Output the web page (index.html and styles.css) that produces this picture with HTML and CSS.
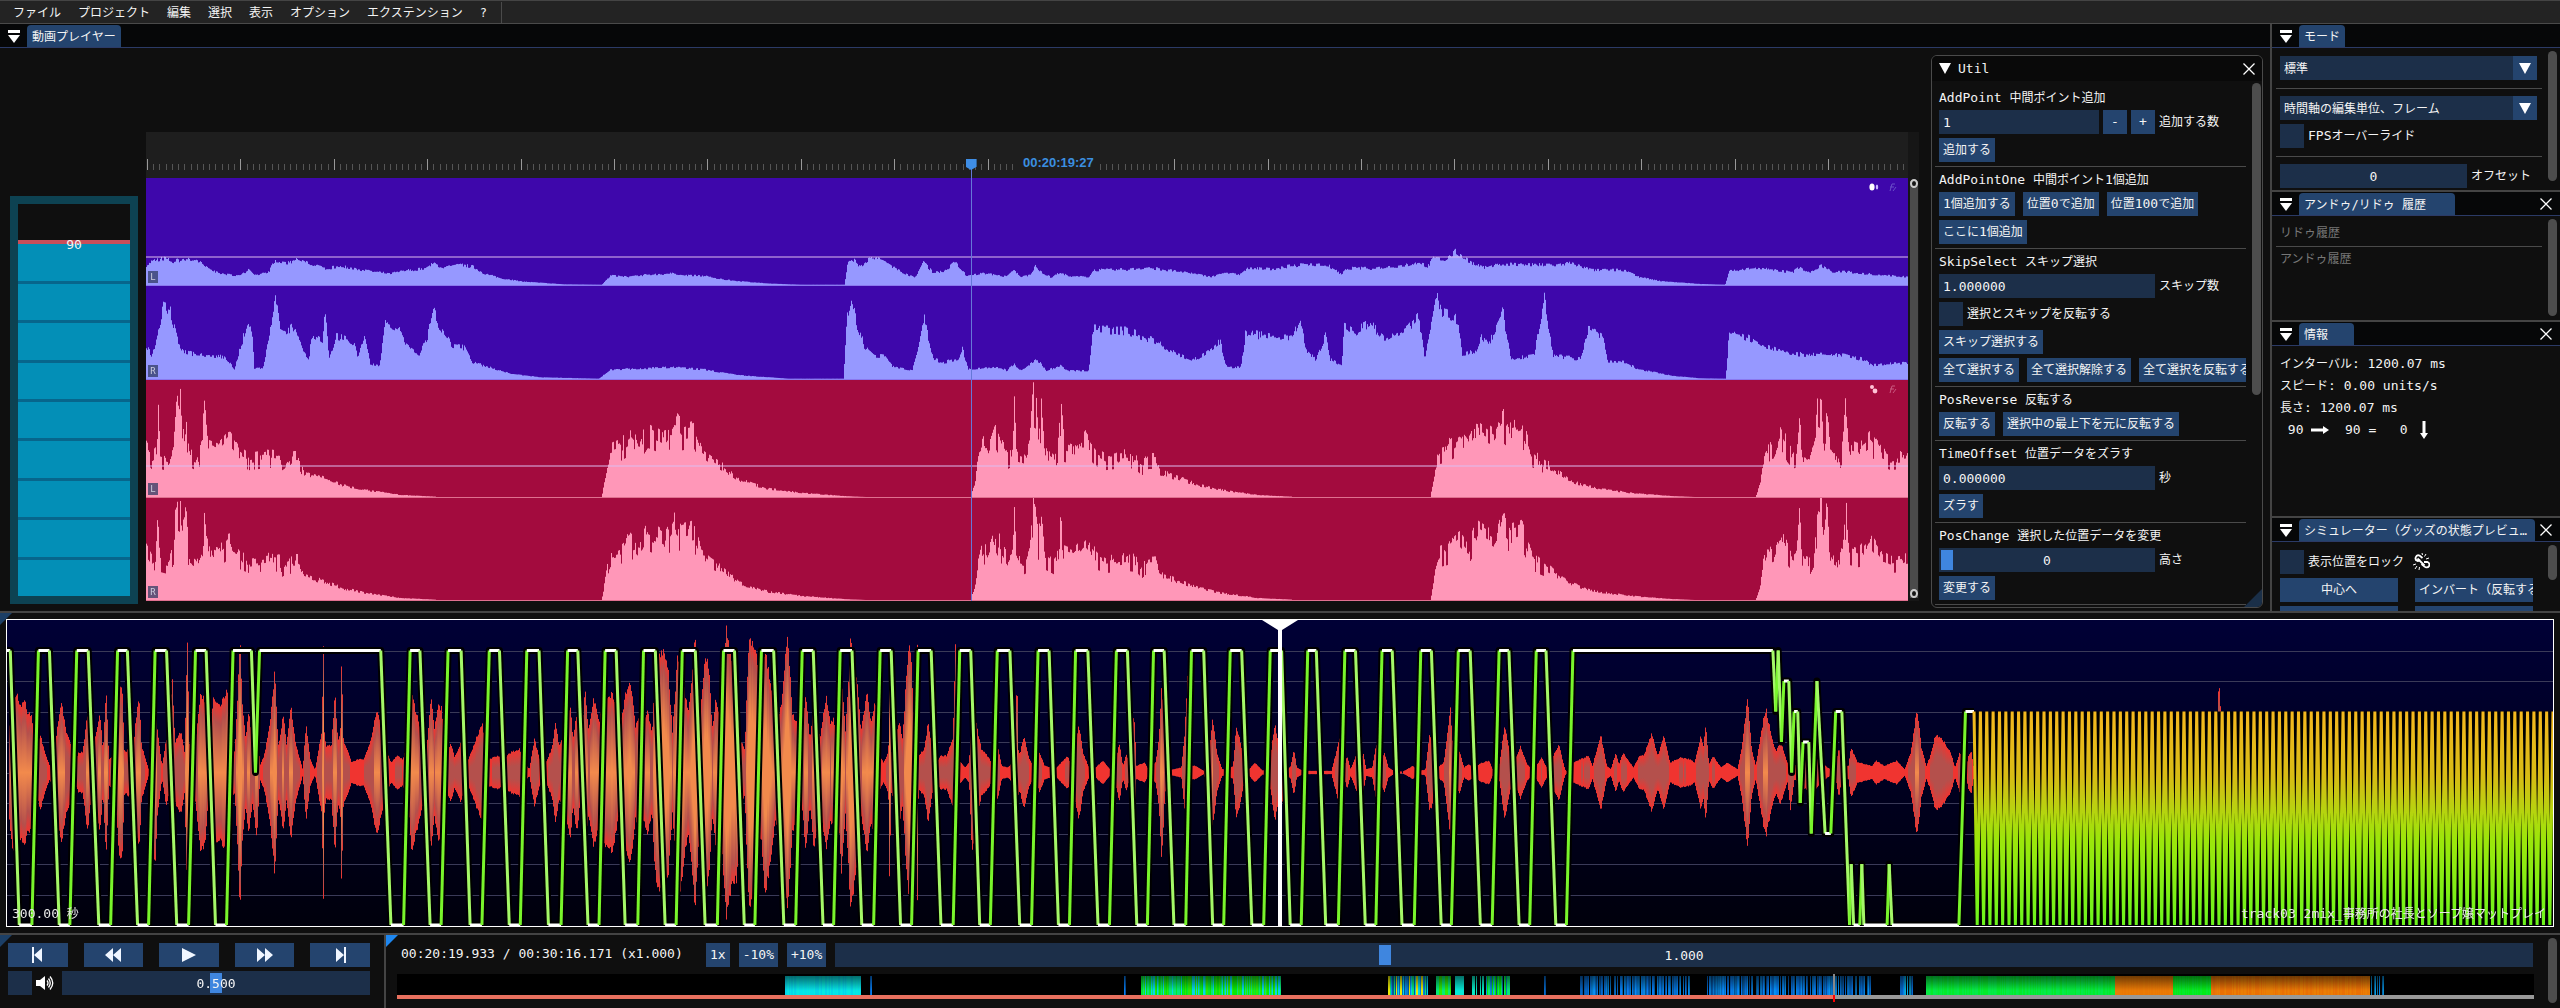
FILE: index.html
```html
<!DOCTYPE html>
<html lang="ja">
	<head>
		<meta charset="utf-8">
		<title>動画プレイヤー</title>
		<link rel="stylesheet" href="styles.css">
	</head>
	<body>
		<svg width="0" height="0" class="defs">
			<symbol id="dock" viewBox="0 0 12 13"><path d="M0 0h12v3H0zM0 5h12L6 13z" fill="#fff"/></symbol>
			<symbol id="tri" viewBox="0 0 12 11"><path d="M0 0h12L6 11z" fill="#fff"/></symbol>
			<symbol id="close" viewBox="0 0 12 12"><path d="M.5.5l11 11M11.5.5l-11 11" stroke="#fff" stroke-width="1.3"/></symbol>
		</svg>

		<nav class="menu">
			<a href="#">ファイル</a>
			<a href="#">プロジェクト</a>
			<a href="#">編集</a>
			<a href="#">選択</a>
			<a href="#">表示</a>
			<a href="#">オプション</a>
			<a href="#">エクステンション</a>
			<a href="#">?</a>
		</nav>

		<main class="main">
			<section class="video">
				<header class="tabs">
					<svg class="dock"><use href="#dock"/></svg>
					<span class="tab first">動画プレイヤー</span>
				</header>
				<div class="stage">
					<div class="sim">
						<div class="simInner">
							<div class="simTop"></div>
							<div class="simBar"></div><div class="simBar"></div><div class="simBar"></div>
							<div class="simBar"></div><div class="simBar"></div><div class="simBar"></div>
							<div class="simBar"></div><div class="simBar"></div><div class="simBar"></div>
							<span class="simValue en">90</span>
						</div>
					</div>
					<div class="editor">
						<div class="tracks">
							<div class="ruler">
								<canvas id="ruler"></canvas>
								<span class="timecode">00:20:19:27</span>
							</div>
							<div class="channel purple left1">
								<canvas data-wave="purpleL"></canvas>
								<div class="level"></div>
								<span class="badge">L</span>
								<svg class="fx" viewBox="0 0 30 10"><ellipse cx="3" cy="4" rx="2.6" ry="3.6" fill="#fff"/><ellipse cx="8" cy="4" rx="1.2" ry="2.6" fill="#c9b6ff"/><path d="M21 8l2-7h3M21 4h4M24 8l3-4" stroke="#6a4fc8" fill="none"/></svg>
							</div>
							<div class="channel purple right1">
								<canvas data-wave="purpleR"></canvas>
								<span class="badge">R</span>
							</div>
							<div class="channel red left2">
								<canvas data-wave="redL"></canvas>
								<div class="level"></div>
								<span class="badge">L</span>
								<svg class="fx" viewBox="0 0 30 10"><circle cx="3" cy="2" r="2" fill="#ffc3d6"/><circle cx="6" cy="6" r="2.4" fill="#ffc3d6"/><path d="M21 8l2-7h3M21 4h4M24 8l3-4" stroke="#c95a80" fill="none"/></svg>
							</div>
							<div class="channel red right2">
								<canvas data-wave="redR"></canvas>
								<span class="badge">R</span>
							</div>
							<div class="needle"></div>
						</div>
						<div class="zoomBar"><i></i></div>
					</div>
				</div>

				<div class="util">
					<header class="utilHead">
						<svg class="tri"><use href="#tri"/></svg>
						<span class="en">Util</span>
						<svg class="close"><use href="#close"/></svg>
					</header>
					<div class="utilBody">
						<div class="utilContent">
							<p><span class="en">AddPoint </span>中間ポイント追加</p>
							<div class="row">
								<input class="field short en" id="addCount" type="text" value="1">
								<button class="step en">-</button>
								<button class="step en">+</button>
								<label for="addCount">追加する数</label>
							</div>
							<div class="row"><button>追加する</button></div>
							<hr>
							<p><span class="en">AddPointOne </span>中間ポイント<span class="en">1</span>個追加</p>
							<div class="row wide"><button><span class="en">1</span>個追加する</button><button>位置<span class="en">0</span>で追加</button><button>位置<span class="en">100</span>で追加</button></div>
							<div class="row"><button>ここに<span class="en">1</span>個追加</button></div>
							<hr>
							<p><span class="en">SkipSelect </span>スキップ選択</p>
							<div class="row">
								<input class="field en" id="skip" type="text" value="1.000000">
								<label for="skip">スキップ数</label>
							</div>
							<div class="row"><input type="checkbox" id="skipRev"><label for="skipRev">選択とスキップを反転する</label></div>
							<div class="row"><button>スキップ選択する</button></div>
							<div class="row wide"><button>全て選択する</button><button>全て選択解除する</button><button>全て選択を反転する</button></div>
							<hr>
							<p><span class="en">PosReverse </span>反転する</p>
							<div class="row wide"><button>反転する</button><button>選択中の最上下を元に反転する</button></div>
							<hr>
							<p><span class="en">TimeOffset </span>位置データをズラす</p>
							<div class="row">
								<input class="field en" id="offset" type="text" value="0.000000">
								<label for="offset">秒</label>
							</div>
							<div class="row"><button>ズラす</button></div>
							<hr>
							<p><span class="en">PosChange </span>選択した位置データを変更</p>
							<div class="row">
								<div class="slider field"><input type="range" id="height" min="0" max="100" value="0"><output class="en">0</output></div>
								<label for="height">高さ</label>
							</div>
							<div class="row"><button>変更する</button></div>
							<hr>
						</div>
						<div class="scroll"><i class="t60"></i></div>
					</div>
					<div class="grip"></div>
				</div>
			</section>

			<aside class="side">
				<section class="panel">
					<header class="tabs">
						<svg class="dock"><use href="#dock"/></svg>
						<span class="tab">モード</span>
					</header>
					<div class="panelBody">
						<div class="panelContent">
							<div class="combo"><select aria-label="モード"><option>標準</option></select><span><svg class="tri"><use href="#tri"/></svg></span></div>
							<hr class="loose">
							<div class="combo"><select aria-label="編集単位"><option>時間軸の編集単位、フレーム</option></select><span><svg class="tri"><use href="#tri"/></svg></span></div>
							<div class="row"><input type="checkbox" id="fps"><label for="fps"><span class="en">FPS</span>オーバーライド</label></div>
							<hr class="loose">
							<div class="row"><input class="field drag en" type="text" id="ofs" value="0"><label for="ofs">オフセット</label></div>
						</div>
						<div class="scroll"><i class="t94"></i></div>
					</div>
				</section>

				<section class="panel">
					<header class="tabs">
						<svg class="dock"><use href="#dock"/></svg>
						<span class="tab history">アンドゥ/リドゥ 履歴</span>
						<svg class="close"><use href="#close"/></svg>
					</header>
					<div class="panelBody">
						<div class="panelContent dim">
							<p>リドゥ履歴</p>
							<hr>
							<p>アンドゥ履歴</p>
						</div>
						<div class="scroll"><i class="t100"></i></div>
					</div>
				</section>

				<section class="panel">
					<header class="tabs">
						<svg class="dock"><use href="#dock"/></svg>
						<span class="tab info">情報</span>
						<svg class="close"><use href="#close"/></svg>
					</header>
					<div class="panelBody">
						<div class="panelContent lines">
							<p>インターバル<span class="en">: 1200.07 ms</span></p>
							<p>スピード<span class="en">: 0.00 units/s</span></p>
							<p>長さ<span class="en">: 1200.07 ms</span></p>
							<p class="en arrows"> 90 <svg width="18" height="18" viewBox="0 0 18 18"><path d="M0 7.500h12V5l6 4-6 4v-2.500H0z" fill="#fff"/></svg>  90 =   0 <svg width="18" height="18" viewBox="0 0 18 18"><path d="M7.500 0v12H5l4 6 4-6h-2.500V0z" fill="#fff"/></svg></p>
						</div>
					</div>
				</section>

				<section class="panel">
					<header class="tabs">
						<svg class="dock"><use href="#dock"/></svg>
						<span class="tab long">シミュレーター（グッズの状態プレビュ…</span>
						<svg class="close"><use href="#close"/></svg>
					</header>
					<div class="panelBody">
						<div class="panelContent">
							<div class="row">
								<input type="checkbox" id="lock"><label for="lock">表示位置をロック</label>
								<svg class="link" viewBox="0 0 18 18"><path d="M8.500 7.500L5.500 8a2.800 2.800 0 1 1 2-5.500l3 2.500M9.500 11l3 2.500a2.800 2.800 0 1 0 3-4.500L12 9M5.500 5.500l7 7" fill="none" stroke="#fff" stroke-width="1.800"/><path d="M10 0l.5 2M14 1l-1.500 2.500M17 5l-3 1M1 12l3-1M3 16l2-3M7 17l.5-3" stroke="#fff"/></svg>
							</div>
							<div class="pair"><button>中心へ</button><button class="cut">インバート（反転する）</button></div>
							<div class="pair"><button></button><button></button></div>
						</div>
						<div class="scroll"><i class="t56"></i></div>
					</div>
				</section>
			</aside>
		</main>

		<section class="timeline">
			<div class="corner"></div>
			<div class="graph">
				<canvas id="graph"></canvas>
				<svg class="playhead" viewBox="0 0 36 306" preserveAspectRatio="none"><path d="M0 0h36L20 10v296h-4V10z" fill="#fff"/></svg>
				<span class="span"><span class="en">300.00 </span>秒</span>
				<span class="track"><span class="en">track03 2mix_</span>事務所の社長とソープ嬢マットプレイ</span>
			</div>
		</section>

		<footer class="bottom">
			<section class="controls">
				<div class="corner"></div>
				<div class="buttons">
					<button aria-label="最初"><svg viewBox="0 0 20 16"><path d="M4 0h2v16H4zM14 1v14L6 8z"/></svg></button>
					<button aria-label="戻る"><svg viewBox="0 0 20 16"><path d="M10 1v14L2 8zM18 1v14l-8-7z"/></svg></button>
					<button aria-label="再生"><svg viewBox="0 0 20 16"><path d="M3 1v14l14-7z"/></svg></button>
					<button aria-label="進む"><svg viewBox="0 0 20 16"><path d="M2 1v14l8-7zM10 1v14l8-7z"/></svg></button>
					<button aria-label="最後"><svg viewBox="0 0 20 16"><path d="M14 0h2v16h-2zM6 1v14l8-7z"/></svg></button>
				</div>
				<div class="volume">
					<input type="checkbox" id="mute">
					<label for="mute" aria-label="ミュート"><svg width="18" height="16" viewBox="0 0 18 16"><path d="M0 5h4l5-4v14l-5-4H0z" fill="#fff"/><path d="M11 5.500q2 2.500 0 5M12.500 3.500q3.500 4.500 0 9M14 1.500q5.500 6.500 0 13" fill="none" stroke="#fff" stroke-width="1.300"/></svg></label>
					<div class="slider grow"><input type="range" aria-label="音量" min="0" max="1000" value="500"><output class="en">0.500</output></div>
				</div>
			</section>
			<section class="seek">
				<div class="corner bright"></div>
				<div class="seekContent">
					<div class="seekRow">
						<span class="time en">00:20:19.933 / 00:30:16.171 (x1.000)</span>
						<button class="en">1x</button>
						<button class="en">-10%</button>
						<button class="en">+10%</button>
						<div class="slider grow"><input type="range" aria-label="速度" min="0" max="1000" value="322"><output class="en">1.000</output></div>
					</div>
					<div class="heat">
						<canvas id="heat"></canvas>
						<div class="progress"><i></i></div>
						<div class="pos"></div>
					</div>
				</div>
				<div class="scroll"><i class="t100"></i></div>
			</section>
		</footer>
		<script src="script.js"></script>
	</body>
</html>
```
FILE: styles.css
```css
* {
	box-sizing: border-box;
}

html, body {
	margin: 0;
	height: 100%;
	background: #0f0f0f;
}

body {
	display: flex;
	flex-direction: column;
	overflow: hidden;
	color: #f4f4f4;
	font-family: "DejaVu Sans Mono", "Noto Sans CJK JP", monospace;
	font-size: 12px;
	line-height: 17px;
	white-space: nowrap;
}

p {
	height: 17px;
	margin: 0;
	flex-shrink: 0;
}

canvas {
	display: block;
	width: 100%;
	height: 100%;
}

.defs {
	position: absolute;
}

.en {
	font-size: 13px;
	white-space: pre;
}

button {
	height: 24px;
	padding: 0 4px;
	border: 0;
	background: #24446e;
	color: #f4f4f4;
	font-family: inherit;
	font-size: 12px;
	line-height: 24px;
	white-space: nowrap;
	flex-shrink: 0;
}

button.en {
	font-size: 13px;
}

input, select {
	margin: 0;
	border: 0;
	border-radius: 0;
	background: #1c2f49;
	color: #f4f4f4;
	font-family: inherit;
	font-size: 12px;
	outline: none;
}

input.en {
	font-size: 13px;
}

input[type=checkbox] {
	appearance: none;
	width: 24px;
	height: 24px;
	flex-shrink: 0;
}

hr {
	height: 1px;
	margin: 0 0 0 -4px;
	border: 0;
	background: #4a4a4a;
	flex-shrink: 0;
}

/* menu */
.menu {
	display: flex;
	align-items: center;
	gap: 17px;
	width: 100%;
	height: 24px;
	padding: 2px 0 0 13px;
	background: #232323;
	border-top: 1px solid #444;
	border-bottom: 1px solid #4a4a4a;
}

.menu a {
	color: #f4f4f4;
	text-decoration: none;
}

.menu a:last-child {
	line-height: 22px;
	padding-right: 14px;
	border-right: 1px solid #4a4a4a;
}

/* tabs */
.tabs {
	display: flex;
	align-items: center;
	height: 24px;
	padding: 1px 8px 0 8px;
	background: #060708;
	border-bottom: 1px solid #2b3a66;
	flex-shrink: 0;
}

.dock {
	width: 12px;
	height: 13px;
}

.tab {
	height: 22px;
	margin-left: 7px;
	padding: 0 5px;
	border-radius: 4px 4px 0 0;
	background: #24446e;
	line-height: 24px;
}

.side .tab {
	min-width: 46px;
}

.side .tab.history {
	min-width: 156px;
}

.side .tab.info {
	min-width: 55px;
}

.tab.long {
	flex: 1;
	overflow: hidden;
	margin-right: 5px;
}

.close {
	width: 12px;
	height: 12px;
	margin-left: auto;
	flex-shrink: 0;
}

.tri {
	width: 12px;
	height: 11px;
}

/* layout */
.main {
	display: flex;
	flex: 1;
	min-height: 0;
	border-bottom: 2px solid #444;
}

.video {
	position: relative;
	display: flex;
	flex-direction: column;
	flex: 1;
	min-width: 0;
}

.stage {
	display: flex;
	flex: 1;
	gap: 8px;
	min-height: 0;
	padding: 84px 351px 7px 10px;
}

.sim {
	width: 128px;
	margin-top: 64px;
	padding: 8px;
	background: #0d4252;
}

.simInner {
	position: relative;
	display: flex;
	flex-direction: column;
	height: 100%;
}

.simTop, .simBar {
	flex: 1;
	background: #0f0f0f;
}

.simTop {
	border-bottom: 1px solid #c94e5a;
}

.simBar {
	background: #038fb7;
	border-top: 3px solid #07668c;
}

.simTop + .simBar {
	border-top-color: #c94e5a;
}

.simValue {
	position: absolute;
	top: 10%;
	left: 0;
	right: 0;
	margin-top: -7px;
	text-align: center;
}

.editor {
	display: flex;
	flex: 1;
	min-width: 0;
	margin-bottom: 3px;
	background: #1e1e1e;
}

.tracks {
	position: relative;
	display: grid;
	grid-template-rows: 46px 108fr 94fr 118fr 103fr;
	flex: 1;
	min-width: 0;
}

.ruler, .channel {
	position: relative;
	min-height: 0;
	overflow: hidden;
}

.channel canvas {
	position: absolute;
	inset: 0;
}

.purple {
	background: #3e07ab;
	border-bottom: 1px solid #8a78ee;
}

.red {
	background: #a30b3e;
	border-bottom: 1px solid #e0708f;
}

.level {
	position: absolute;
	top: 73%;
	left: 0;
	right: 0;
	height: 2px;
	background: rgba(222, 190, 240, .5);
}

.badge {
	position: absolute;
	left: 2px;
	bottom: 2px;
	width: 10px;
	height: 12px;
	background: rgba(50, 60, 100, .75);
	color: #ccd;
	font-size: 9px;
	line-height: 12px;
	text-align: center;
}

.fx {
	position: absolute;
	top: 5px;
	right: 9px;
	width: 30px;
	height: 10px;
}

.timecode {
	position: absolute;
	top: 22px;
	left: 50%;
	margin-left: -8px;
	padding: 0 4px;
	background: #1e1e1e;
	color: #3b8fe0;
	font-family: "Liberation Sans", sans-serif;
	font-size: 13px;
	font-weight: bold;
}

.needle {
	position: absolute;
	top: 27px;
	bottom: 0;
	left: 46.8%;
	width: 1px;
	background: #6577d8;
}

.needle::before {
	content: "";
	position: absolute;
	left: -5px;
	width: 11px;
	height: 11px;
	background: #3f8ee6;
	clip-path: polygon(0 0, 100% 0, 100% 70%, 50% 100%, 0 70%);
}

.zoomBar {
	width: 11px;
	padding: 49px 0 3px 2px;
	background: #161616;
}

.zoomBar i {
	position: relative;
	display: block;
	width: 8px;
	height: 100%;
	background: #4b4b4b;
}

.zoomBar i::before, .zoomBar i::after {
	content: "";
	position: absolute;
	left: 0;
	width: 4px;
	height: 5px;
	border: 2px solid #ccc;
	border-radius: 50%;
	background: #161616;
}

.zoomBar i::before {
	top: -2px;
}

.zoomBar i::after {
	bottom: 0;
}

/* util window */
.util {
	position: absolute;
	top: 31px;
	right: 7px;
	bottom: 3px;
	width: 332px;
	display: flex;
	flex-direction: column;
	border: 1px solid #4a4a4a;
	border-radius: 6px;
	background: #0f0f0f;
	overflow: hidden;
}

.utilHead {
	display: flex;
	align-items: center;
	gap: 7px;
	height: 25px;
	padding: 0 7px;
	background: #090909;
	flex-shrink: 0;
}

.utilBody {
	display: flex;
	flex: 1;
	min-height: 0;
}

.utilContent {
	display: flex;
	flex-direction: column;
	gap: 4px;
	flex: 1;
	min-width: 0;
	overflow: hidden;
	padding: 8px 0 0 7px;
}

.row {
	display: flex;
	align-items: center;
	gap: 4px;
	height: 24px;
	flex-shrink: 0;
}

.row.wide {
	gap: 8px;
}

.field {
	width: 216px;
	height: 24px;
	padding: 0 4px;
}

.field.short {
	width: 160px;
}

.step {
	width: 24px;
}

.grip {
	position: absolute;
	right: 0;
	bottom: 0;
	width: 18px;
	height: 18px;
	background: #1a2f48;
	clip-path: polygon(100% 0, 100% 100%, 0 100%);
}

.scroll {
	width: 9px;
	margin: 2px 1px 4px 6px;
	flex-shrink: 0;
}

.scroll i {
	display: block;
	height: 100%;
	border-radius: 5px;
	background: #4d4d4d;
}

.scroll .t60 {
	height: 60%;
}

.scroll .t94 {
	height: 96%;
}

.scroll .t56 {
	height: 56%;
}

/* sliders */
.slider {
	position: relative;
	height: 24px;
	padding: 0;
	background: #1c2f49;
}

.slider input {
	appearance: none;
	display: block;
	width: 100%;
	height: 24px;
	padding: 0 2px;
	background: none;
}

.slider input::-webkit-slider-thumb {
	appearance: none;
	width: 12px;
	height: 20px;
	background: #3f86df;
}

.slider output {
	position: absolute;
	inset: 0;
	line-height: 26px;
	text-align: center;
	pointer-events: none;
}

.grow {
	flex: 1;
}

/* right column */
.side {
	display: grid;
	grid-template-rows: 166fr 130fr 196fr 95fr;
	width: 290px;
	border-left: 2px solid #444;
}

.panel {
	display: flex;
	flex-direction: column;
	min-height: 0;
	overflow: hidden;
}

.panel + .panel {
	border-top: 2px solid #444;
}

.panelBody {
	display: flex;
	flex: 1;
	min-height: 0;
}

.panelContent {
	display: flex;
	flex-direction: column;
	gap: 4px;
	flex: 1;
	min-width: 0;
	overflow: hidden;
	padding: 8px 0 0 8px;
}

.panel .scroll {
	margin: 3px 3px 4px 6px;
}

.loose {
	margin: 4px 0 3px -4px;
}

.combo {
	position: relative;
	height: 24px;
	margin-right: 5px;
	flex-shrink: 0;
}

.combo select {
	appearance: none;
	width: 100%;
	height: 24px;
	padding: 2px 28px 0 4px;
}

.combo span {
	position: absolute;
	top: 0;
	right: 0;
	display: grid;
	place-items: center;
	width: 24px;
	height: 24px;
	background: #24446e;
	pointer-events: none;
}

.drag {
	width: 187px;
	text-align: center;
}

.dim {
	gap: 4px;
	padding-top: 9px;
	color: #777;
}

.lines {
	gap: 5px;
	padding-top: 9px;
}

.arrows {
	display: flex;
	align-items: center;
}

.link {
	width: 18px;
	height: 18px;
	margin-left: 4px;
}

.pair {
	display: grid;
	grid-template-columns: 1fr 1fr;
	gap: 17px;
	margin-right: 9px;
	flex-shrink: 0;
}

.pair button {
	overflow: hidden;
}

.cut {
	text-align: left;
}

/* timeline */
.corner {
	position: absolute;
	top: 0;
	left: 0;
	width: 12px;
	height: 12px;
	background: #1c3f66;
	clip-path: polygon(0 0, 100% 0, 0 100%);
}

.corner.bright {
	background: #1e87f0;
}

.timeline {
	position: relative;
	height: 322px;
	padding: 6px;
	border-bottom: 2px solid #444;
	flex-shrink: 0;
}

.graph {
	position: relative;
	height: 308px;
	border: 1px solid #fff;
	background: linear-gradient(#000036, #00000c);
}

.playhead {
	position: absolute;
	top: 0;
	left: 50%;
	width: 36px;
	height: 100%;
	margin-left: -18px;
}

.span, .track {
	position: absolute;
	bottom: 3px;
	left: 5px;
	color: #e8e8e8;
}

.track {
	left: auto;
	right: 7px;
}

/* bottom */
.bottom {
	display: flex;
	height: 73px;
	flex-shrink: 0;
}

.controls {
	position: relative;
	width: 386px;
	padding: 8px 14px 0 8px;
	border-right: 2px solid #444;
}

.buttons {
	display: grid;
	grid-template-columns: repeat(5, 1fr);
	gap: 16px;
}

.buttons svg {
	display: block;
	width: 20px;
	height: 16px;
	margin: 0 auto;
	fill: #f0f6ff;
}

.volume {
	display: flex;
	align-items: center;
	margin-top: 4px;
}

.volume label {
	display: flex;
	margin: 0 8px 0 4px;
}

.seek {
	position: relative;
	display: flex;
	flex: 1;
	min-width: 0;
}

.seekContent {
	flex: 1;
	min-width: 0;
	padding: 8px 12px 0 11px;
}

.seekRow {
	display: flex;
	gap: 9px;
	margin-right: 1px;
	padding-left: 4px;
}

.time {
	width: 296px;
	line-height: 22px;
}

.seek .scroll {
	margin: 3px 3px 5px 2px;
}

.heat {
	position: relative;
	height: 25px;
	margin-top: 7px;
	background: #000;
}

.heat canvas {
	height: 21px;
}

.progress {
	height: 4px;
	background: #999;
}

.progress i {
	display: block;
	width: 67.2%;
	height: 4px;
	background: #e8705e;
}

.pos {
	position: absolute;
	top: 0;
	left: 67.2%;
	width: 2px;
	height: 28px;
	background: linear-gradient(#888 21px, #f00 21px);
}
```
FILE: script.js
```js
// keyframes: x, height, x, height ...
var waves = {
	purpleL: [12,60,25,75,40,80,60,70,80,80,100,75,118,50,135,38,150,32,175,28,190,45,200,28,225,40,235,70,260,65,277,80,295,65,320,50,350,55,375,50,400,42,435,34,470,45,500,50,512,65,530,52,560,60,580,55,600,35,630,20,670,10,740,2,805,1,820,28,850,25,880,30,930,35,960,28,985,28,1000,20,1040,12,1100,4,1150,1,1228,1,1233,70,1240,80,1255,55,1270,78,1285,80,1300,70,1320,45,1350,22,1365,70,1380,40,1400,40,1420,68,1440,28,1470,35,1510,25,1522,45,1535,25,1550,30,1560,55,1568,40,1588,22,1603,40,1618,25,1653,25,1660,45,1688,45,1768,50,1828,35,1868,25,1883,35,1918,32,1928,50,1968,48,2018,60,2068,60,2093,32,2103,50,2148,50,2208,60,2228,70,2243,55,2253,80,2273,75,2292,100,2308,80,2328,60,2348,50,2368,65,2418,60,2468,60,2493,65,2528,45,2588,45,2608,25,2648,12,2718,3,2761,1,2768,42,2818,50,2878,38,2891,55,2908,35,2928,60,2948,38,2968,40,3018,32,3080,24],
	purpleR: [12,100,22,70,32,140,42,220,52,215,62,150,72,85,100,72,150,65,165,30,175,90,190,180,197,120,200,30,215,35,230,170,238,245,245,150,255,140,272,160,285,80,295,60,300,130,318,110,323,220,330,60,343,130,375,110,380,60,393,130,402,45,418,40,428,165,440,150,455,140,470,90,487,70,500,120,512,200,525,150,545,100,565,95,580,50,610,35,650,15,700,5,800,1,820,28,930,35,985,28,1040,12,1130,1,1226,1,1232,180,1240,250,1250,160,1262,100,1280,70,1295,70,1310,40,1345,25,1355,80,1367,180,1382,60,1400,50,1425,60,1433,90,1443,30,1500,35,1510,25,1522,45,1535,25,1560,55,1568,50,1578,25,1603,40,1618,25,1653,25,1660,150,1718,145,1768,115,1808,75,1833,55,1853,75,1881,115,1893,35,1918,35,1926,140,1968,125,2008,130,2021,175,2033,80,2048,60,2065,130,2073,60,2093,40,2098,160,2118,140,2143,170,2168,115,2208,150,2228,185,2238,60,2258,250,2268,200,2296,180,2303,75,2328,85,2338,130,2348,100,2374,200,2388,60,2428,70,2446,240,2461,70,2508,60,2523,150,2548,130,2556,55,2588,50,2608,30,2668,10,2718,2,2762,1,2768,140,2788,135,2828,100,2868,75,2968,70,2998,60,3018,42,3080,50]
};
var hitA = [0,0,8,40,12,100,22,160,30,130,45,200,55,150,65,120,72,130,76,280,80,120,95,110,103,150,109,300,115,290,118,170,124,270,130,130,145,110,152,150,157,275,163,150,180,140,200,175,220,130,235,115,270,125,288,120,293,80,310,120,322,120,330,75,365,55,400,35,440,20,500,6,560,1];
var hitB = [0,0,8,80,14,140,30,150,50,180,65,150,80,210,110,180,127,230,140,200,160,210,175,130,190,110,210,90,240,50,290,25,350,12,420,3,460,0];

var pulse = [12,90,24,90,46,0,77,0,93,90,120,90,144,0,170,0,187,90,215,90,241,0,270,0,287,90,311,90,336,0,363,0,379,90,407,90,432,0,461,0,478,90,504,90,527,0,554,0,570,90,615,90,625,50,635,90,932,90,957,0,988,0,1004,90,1028,90,1053,0,1080,0,1097,90,1129,90,1151,0,1180,0,1198,90,1223,90,1247,0,1274,0,1290,90,1320,90,1343,0,1374,0,1390,90,1415,90,1440,0,1467,0,1482,90,1509,90,1531,0,1562,0,
	1576,90,1605,90,1629,0,1656,0,1671,90,1703,90,1727,0,1757,0,1772,90,1799,90,1823,0,1849,0,1865,90,1895,90,1920,0,1949,0,1965,90,1992,90,2016,0,2042,0,2058,90,2087,90,2111,0,2140,0,2156,90,2183,90,2206,0,2233,0,2249,90,2281,90,2305,0,2335,0,2351,90,2378,90,2400,0,2426,0,2443,90,2474,90,2498,0,2527,0,2543,90,2570,90,2593,0,2620,0,2635,90,2665,90,2690,0,2718,0,2735,90,2762,90,2785,0,2811,0,2826,90,2852,90,2876,0,2905,0,2919,90,2949,90,2971,0,2998,0,3014,90,3042,90,3067,0,3096,0,3112,90,3140,90,
	3161,0,3188,0,3204,90,3225,90,3248,0,3279,0,3295,90,3321,90,3345,0,3371,0,3386,90,3411,90,3435,0,3465,0,3481,90,3507,90,3531,0,3556,0,3573,90,3602,90,3627,0,3656,0,3673,90,3697,90,3722,0,3748,0,3764,90,3788,90,3812,0,3838,0,3854,90,4344,90,4351,70,4357,90,4365,60,4371,80,4383,80,4390,50,4396,70,4405,70,4411,40,4418,60,4432,60,4438,30,4452,80,4472,30,4486,30,4498,70,4513,70,4532,0,4536,20,4542,0,4557,0,4562,20,4567,0,4624,0,4629,20,4636,0,4800,0,4816,70,4837,70];

var audio = [20,125,28,230,36,235,50,205,58,225,66,170,75,175,85,60,97,110,108,60,120,20,135,100,148,215,160,120,170,90,178,15,190,60,200,60,213,180,222,60,232,110,243,180,250,60,258,245,265,40,280,60,290,260,297,270,303,60,325,80,335,210,340,200,345,80,362,10,372,30,377,300,384,120,395,20,405,100,412,60,420,290,427,90,442,125,450,60,457,405,462,90,475,60,488,230,500,220,510,60,520,220,535,200,545,215,555,250,562,80,573,60,580,230,586,405,592,200,600,100,607,180,617,90,627,200,635,20,645,50,660,150,671,300,680,80,693,180,700,80,711,200,722,90,740,8,748,150,758,40,770,8,780,80,787,120,790,422,793,120,797,80,810,80,819,235,826,100,832,120,835,360,839,100,860,30,875,40,890,40,905,90,922,190,935,110,945,60,957,30,970,50,985,40,1000,100,1006,240,1020,170,1030,120,1042,60,1055,225,1062,130,1072,200,1080,190,1090,40,1102,90,1112,45,1127,90,1140,20,1155,70,1180,150,1190,50,1200,40,1215,50,1230,40,1250,60,1272,70,1282,30,1295,10,1308,100,1320,40,1335,30,1350,70,1360,150,1368,80,1385,120,1395,210,1402,100,1412,180,1422,60,1432,250,1440,130,1453,225,1465,150,1480,215,1500,235,1515,120,1530,230,1543,275,1555,140,1565,180,
	1573,130,1585,190,1596,120,1603,300,1613,360,1623,370,1636,300,1646,120,1658,340,1666,345,1678,220,1686,180,1701,410,1713,150,1726,350,1736,320,1743,130,1753,225,1763,150,1778,430,1790,340,1803,320,1813,100,1823,70,1833,400,1853,360,1863,180,1873,370,1886,270,1898,140,1913,200,1928,420,1940,180,1950,150,1963,90,1973,240,1983,100,1993,230,2008,100,2023,235,2033,140,2041,170,2050,60,2060,300,2070,120,2083,415,2096,300,2108,130,2123,240,2133,150,2142,220,2150,60,2163,30,2175,60,2178,350,2182,60,2203,150,2210,100,2223,360,2231,370,2238,120,2243,60,2246,425,2249,50,2263,70,2273,155,2283,60,2293,25,2303,50,2318,50,2333,100,2340,390,2344,60,2346,40,2363,15,2373,30,2380,240,2388,160,2403,70,2418,50,2428,30,2443,80,2453,20,2468,15,2478,30,2487,60,2490,330,2494,60,2498,60,2508,110,2518,50,2533,10,2546,60,2558,20,2573,15,2588,15,2613,50,2626,20,2635,100,2642,145,2652,60,2665,20,2678,10,2701,35,2718,10,2730,20,2741,90,2750,20,2758,55,2768,15,2777,190,2783,20,2803,30,2813,8,2830,30,2838,100,2845,270,2853,60,2868,8,2893,15,2901,110,2908,280,2915,20,2928,20,2948,5,2961,60,2970,165,2980,60,2993,10,3008,10,3020,20,3028,140,3038,90,3048,20,3058,8,3073,30,3093,5,3108,20,3123,150,3133,60,
	3141,90,3151,5,3161,20,3169,70,3176,15,3191,5,3261,5,3281,100,3286,40,3294,20,3299,50,3308,10,3324,60,3331,10,3339,60,3346,10,3361,15,3371,85,3378,20,3391,60,3401,15,3416,3,3436,3,3461,20,3471,5,3491,8,3501,110,3508,100,3516,10,3536,30,3544,100,3552,200,3560,50,3576,60,3586,15,3596,25,3611,15,3631,30,3648,35,3656,10,3671,10,3686,145,3696,70,3706,20,3724,80,3741,25,3756,5,3776,45,3791,10,3808,60,3819,85,3831,20,3836,3,3854,30,3891,50,3901,20,3921,115,3936,20,3946,10,3958,60,3966,25,3976,60,4001,15,4016,50,4026,50,4046,115,4061,50,4076,110,4091,30,4116,45,4141,40,4151,30,4166,110,4173,80,4179,145,4186,25,4196,50,4216,15,4231,30,4256,10,4266,70,4281,225,4291,70,4301,20,4314,120,4326,195,4339,110,4351,60,4361,100,4371,55,4379,30,4386,110,4396,20,4421,50,4446,50,4456,40,4476,15,4481,12,4496,15,4505,75,4511,20,4528,20,4534,75,4551,30,4571,25,4586,20,4596,35,4616,20,4646,35,4666,10,4681,60,4696,190,4703,130,4706,80,4719,20,4729,50,4742,115,4764,90,4779,60,4789,15,4801,60,4809,30,4816,10,4822,50,4829,65,4837,0,5425,0,5431,150,5436,270,5442,150,5447,0,6272,0];

// from, to, hues, density
var heatmap = [
	[785, 861, [185, 182, 178], 1], [870, 872, [210], 1], [1124, 1126, [210], 1],
	[1141, 1281, [120, 150, 185, 110, 130], 1], [1388, 1428, [205, 150, 60, 185], 1],
	[1436, 1451, [150, 110], 1], [1455, 1464, [175], 1], [1470, 1484, [170], .5],
	[1486, 1510, [150, 120, 200], .85], [1544, 1546, [210], 1], [1579, 1690, [210, 205], .75],
	[1706, 1873, [210, 205], .75], [1900, 1914, [210, 195], .7], [1926, 2115, [130, 135, 138], 1],
	[2115, 2173, [30, 31], 1], [2173, 2211, [125, 130], 1], [2211, 2370, [30, 28, 32], 1],
	[2370, 2384, [200, 205], .6]
];

var seed = 7;
function rnd() {
	seed = (seed * 16807) % 2147483647;
	return seed / 2147483647;
}

function setup(canvas) {
	canvas.width = canvas.clientWidth;
	canvas.height = canvas.clientHeight;
	return canvas.getContext('2d');
}

function sample(keys, x) {
	for (var i = 2; i < keys.length; i += 2) {
		if (x <= keys[i]) {
			var t = (x - keys[i - 2]) / (keys[i] - keys[i - 2]);
			return t < 0 ? 0 : keys[i - 1] + (keys[i + 1] - keys[i - 1]) * t;
		}
	}
	return 0;
}

function redWave(x) {
	return Math.max(
		sample(hitA, x + 44), sample(hitA, x - 1447), sample(hitA, x - 2814),
		sample(hitB, x - 805), sample(hitB, x - 2248)
	);
}

function drawWave(canvas) {
	var ctx = setup(canvas);
	var name = canvas.getAttribute('data-wave');
	var red = name.indexOf('red') === 0;
	var n = 1;
	ctx.fillStyle = red ? '#ff97b8' : '#9698ff';
	for (var x = 0; x < canvas.width; x++) {
		var k = 12 + x / canvas.width * 3068;
		var h = red ? redWave(k) : sample(waves[name], k);
		// each peak is about two pixels wide
		if (x % 2 === 0 || rnd() > .7) {
			n = 1 + (rnd() - .5) * (red ? .3 : .2);
			if (red && h > 90 && rnd() > .75) n = rnd() > .5 ? 1.15 : .7;
		}
		h = h * n / 3;
		ctx.fillRect(x, canvas.height - h, 1, h);
	}
}

function drawRuler(canvas) {
	var ctx = setup(canvas);
	for (var i = 0; i < 283; i++) {
		var x = Math.round(1 + i * canvas.width / 283);
		var major = i % 15 === 0;
		ctx.fillStyle = major ? '#999' : '#555';
		ctx.fillRect(x, major ? 27 : 32, 1, major ? 11 : 6);
	}
}

function drawGraph(canvas) {
	var ctx = setup(canvas);
	var w = canvas.width, h = canvas.height;
	var sx = w / 6240;
	function X(x) { return (x - 16) * sx; }
	function Y(v) { return h - 1 - v * (h - 1) / 100; }

	ctx.fillStyle = '#3a3a58';
	for (var v = 10; v < 100; v += 10) {
		ctx.fillRect(0, Math.round(Y(v)), w, 1);
	}

	var mid = Y(50);
	for (var px = 0; px < w; px++) {
		var a = sample(audio, px / sx + 16) * (1 + (rnd() - .5) * .1) / 3;
		if (a < 1) continue;
		var g = ctx.createLinearGradient(0, mid - a, 0, mid + a);
		var brown = Math.min(.5, 14 / a);
		g.addColorStop(0, '#f03430');
		g.addColorStop(1, '#f03430');
		if (a > 14) {
			g.addColorStop(brown * .7, '#b4504c');
			g.addColorStop(1 - brown * .7, '#b4504c');
		}
		if (a > 50) {
			var o = Math.min(.5, 38 / a);
			g.addColorStop(o, '#f28a4c');
			g.addColorStop(1 - o, '#f28a4c');
		}
		ctx.fillStyle = g;
		ctx.fillRect(px, mid - a, 1, a * 2);
	}

	ctx.lineJoin = 'round';
	ctx.strokeStyle = '#000';
	ctx.lineWidth = 7;
	ctx.beginPath();
	for (var i = 0; i < pulse.length; i += 2) {
		ctx.lineTo(X(pulse[i]), Y(pulse[i + 1]));
	}
	ctx.stroke();
	ctx.lineWidth = 3;
	for (i = 2; i < pulse.length; i += 2) {
		var d = pulse[i + 1] - pulse[i - 1];
		ctx.strokeStyle = d === 0 ? '#fff' : d > 0 ? '#78f52c' : '#a4f868';
		ctx.beginPath();
		ctx.moveTo(X(pulse[i - 2]), Y(pulse[i - 1]));
		ctx.lineTo(X(pulse[i]), Y(pulse[i + 1]));
		ctx.stroke();
	}

	// fast section
	var from = X(4837), to = w, step = (to - from) / 91;
	ctx.fillStyle = '#000';
	ctx.fillRect(from, Y(70), to - from, Y(0) - Y(70));
	var heat = ctx.createLinearGradient(0, Y(70), 0, Y(0));
	heat.addColorStop(0, '#f5b820');
	heat.addColorStop(.3, '#d8bc14');
	heat.addColorStop(.6, '#9ce60a');
	heat.addColorStop(1, '#6cf51e');
	ctx.strokeStyle = heat;
	ctx.lineJoin = 'bevel';
	ctx.lineWidth = 3;
	ctx.beginPath();
	for (i = 0; i < 91; i++) {
		ctx.moveTo(from + i * step, Y(70));
		ctx.lineTo(from + i * step + step / 2, Y(0));
		ctx.lineTo(from + (i + 1) * step, Y(70));
	}
	ctx.stroke();
}

function drawHeat(canvas) {
	var ctx = setup(canvas);
	var s = canvas.width / 2137;
	heatmap.forEach((r) => {
		for (var x = r[0]; x < r[1]; x++) {
			if (rnd() > r[3]) continue;
			var hue = r[2][Math.floor(rnd() * r[2].length)];
			ctx.fillStyle = 'hsl(' + hue + ', 95%, ' + (hue > 190 ? 28 + rnd() * 22 : 47) + '%)';
			ctx.fillRect(Math.round((x - 397) * s), 2, 1, 19);
		}
	});
	var shade = ctx.createLinearGradient(0, 0, 0, 21);
	shade.addColorStop(0, 'rgba(0,0,0,.6)');
	shade.addColorStop(.8, 'rgba(0,0,0,0)');
	ctx.fillStyle = shade;
	ctx.fillRect(0, 0, canvas.width, 21);
}

function draw() {
	seed = 7;
	document.querySelectorAll('[data-wave]').forEach(drawWave);
	drawRuler(document.getElementById('ruler'));
	drawGraph(document.getElementById('graph'));
	drawHeat(document.getElementById('heat'));
}

window.onresize = draw;
draw();
```
